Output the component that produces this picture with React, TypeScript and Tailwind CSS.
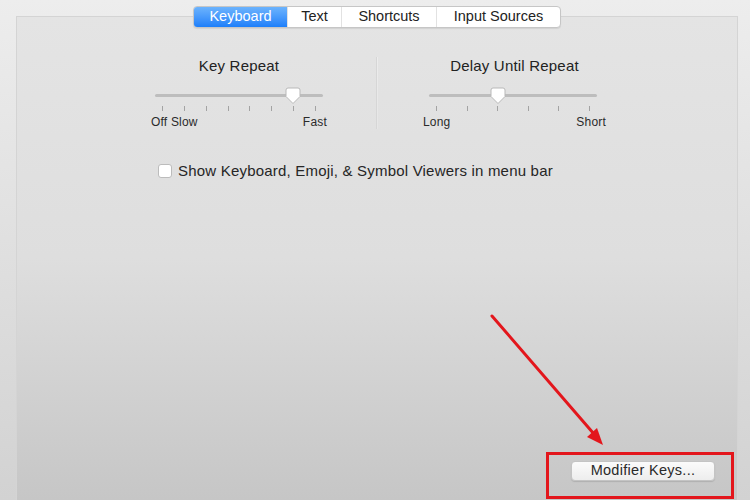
import React from "react";

const font = { fontFamily: '"Liberation Sans", Arial, sans-serif' };

const Thumb = () => (
  <svg width="18" height="18" viewBox="0 0 18 18" className="absolute -top-[7px] -ml-[9px]">
    <path
      d="M2 3 Q2 1 4 1 H14 Q16 1 16 3 V9.5 L9 16.5 L2 9.5 Z"
      fill="#ffffff"
      stroke="#b9b9b9"
      strokeWidth="1"
    />
  </svg>
);

type SliderProps = {
  title: string;
  left: string;
  right: string;
  ticks: number;
  value: number;
  width: string;
  trackClass: string;
};

const Slider = ({ title, left, right, ticks, value, width, trackClass }: SliderProps) => (
  <div className={`${width} flex flex-col`}>
    <div className="text-center text-[15px] tracking-[0.2px] text-[#222] leading-[18px]">{title}</div>
    <div className={`relative mt-[19px] h-[3px] rounded-full bg-[#bdbdbd] ${trackClass}`}>
      <div className="absolute top-0" style={{ left: `${value}%` }}>
        <Thumb />
      </div>
    </div>
    <div className={`mt-[9px] flex justify-between ${trackClass} px-[7px]`}>
      {Array.from({ length: ticks }).map((_, i) => (
        <div key={i} className="w-px h-[5px] bg-[#a3a3a3]" />
      ))}
    </div>
    <div className="mt-[4px] flex justify-between text-[12px] tracking-[0.2px] leading-[14px] text-[#2a2a2a]">
      <span>{left}</span>
      <span>{right}</span>
    </div>
  </div>
);

export default function App() {
  const tabs = ["Keyboard", "Text", "Shortcuts", "Input Sources"];
  const tabW = ["w-[93px]", "w-[54px]", "w-[95px]", "w-[124px]"];
  return (
    <div style={font} className="relative w-[750px] h-[500px] overflow-hidden bg-gradient-to-b from-[#ededed] to-[#d2d2d2] pt-[16px] pl-[16px] pr-[12px]">
      <div className="h-full flex flex-col border border-b-0 border-[#d4d4d4] bg-gradient-to-b from-[#e4e4e4] via-[#dedede] to-[#c6c6c6]">
        {/* tabs */}
        <div className="flex justify-center -mt-[11px]">
          <div className="flex h-[22px] rounded-[4px] border border-[#c6c6c6] bg-white shadow-[0_1px_1px_rgba(0,0,0,0.08)] overflow-hidden">
            {tabs.map((t, i) => (
              <div
                key={t}
                className={`${tabW[i]} flex items-center justify-center text-[14.5px] ${
                  i === 0
                    ? "bg-gradient-to-b from-[#6cb3fd] to-[#1c7ffa] text-white"
                    : "text-[#222] border-l border-[#e2e2e2]"
                }`}
              >
                {t}
              </div>
            ))}
          </div>
        </div>

        {/* sliders */}
        <div className="flex mt-[29px] ml-[134px]">
          <Slider
            title="Key Repeat"
            left="Off Slow"
            right="Fast"
            ticks={8}
            value={82}
            width="w-[176px]"
            trackClass="mx-[4px]"
          />
          <div className="ml-[49px] w-[2px] h-[72px] bg-gradient-to-b from-[#ececec] to-[#e6e6e6] border-l border-[#d6d6d6]" />
          <Slider
            title="Delay Until Repeat"
            left="Long"
            right="Short"
            ticks={6}
            value={41}
            width="w-[183px] ml-[45px]"
            trackClass="ml-[6px] mr-[9px]"
          />
        </div>

        {/* checkbox */}
        <div className="flex items-center mt-[31px] ml-[141px]">
          <div className="w-[14px] h-[14px] rounded-[3px] border border-[#bcbcbc] bg-white" />
          <span className="ml-[6px] text-[15px] tracking-[0.2px] text-[#262626]">
            Show Keyboard, Emoji, &amp; Symbol Viewers in menu bar
          </span>
        </div>

        {/* bottom */}
        <div className="mt-auto flex justify-end mr-[3px] mb-[1px]">
          <div className="w-[188px] h-[47px] border-[3px] border-[#e3161c] flex justify-end pt-[6px] pr-[16px]">
            <div className="w-[144px] h-[20px] rounded-[4px] bg-gradient-to-b from-[#fbfbfb] to-[#ededed] border border-[#c4c4c4] shadow-[0_1px_1px_rgba(0,0,0,0.12)] flex items-center justify-center text-[14.5px] tracking-[0.3px] text-[#2a2a2a]">
              Modifier Keys...
            </div>
          </div>
        </div>
      </div>

      {/* annotation arrow */}
      <svg className="absolute inset-0 pointer-events-none" width="750" height="500">
        <line x1="492" y1="316" x2="594" y2="434" stroke="#e3161c" strokeWidth="3" strokeLinecap="round" />
        <polygon points="603,445 587,437 597,428" fill="#e3161c" />
      </svg>
    </div>
  );
}
